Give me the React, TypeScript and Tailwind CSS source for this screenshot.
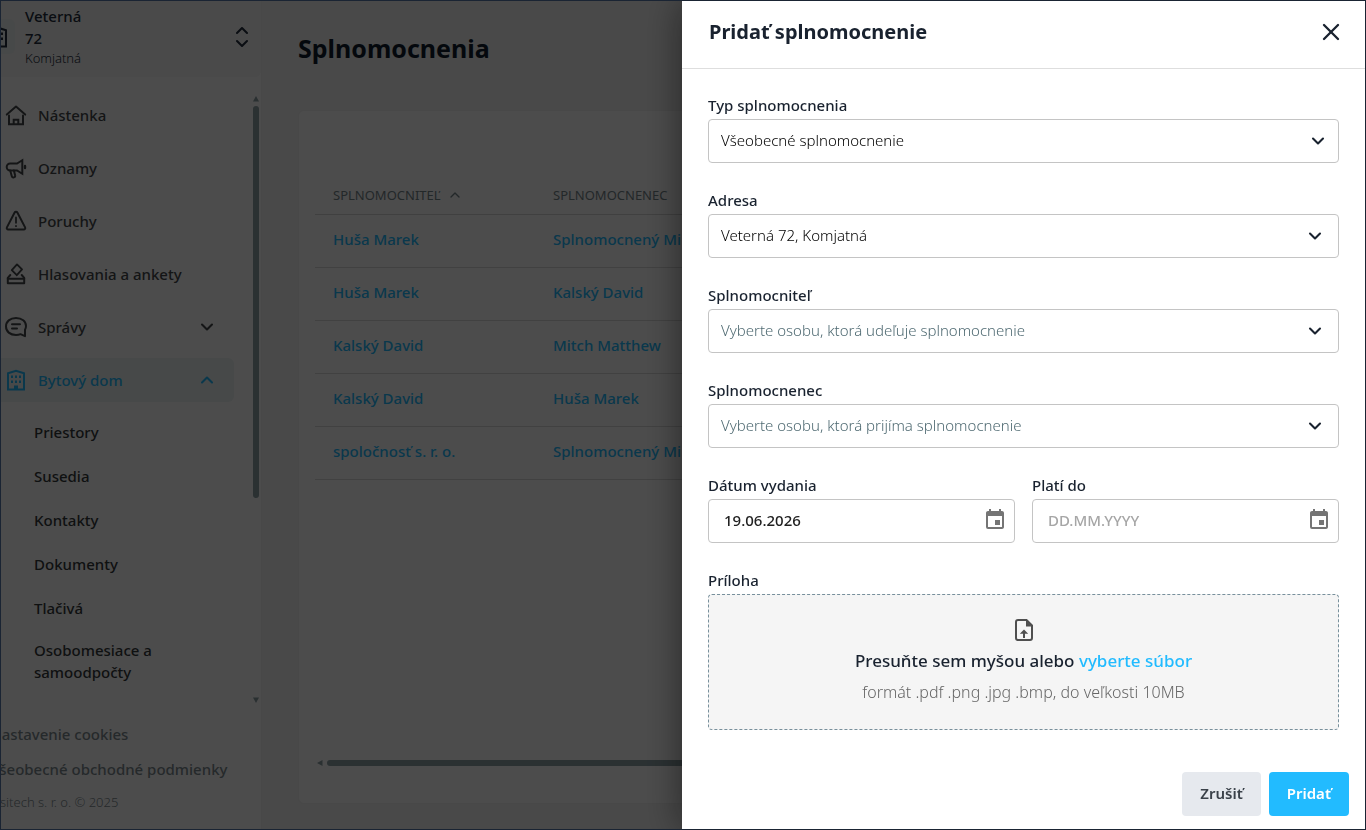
import { useState, type ReactNode } from 'react'
import { ChevronDown, ChevronUp, X } from 'lucide-react'
import { MdEvent } from 'react-icons/md'

const subItems = ['Priestory', 'Susedia', 'Kontakty', 'Dokumenty', 'Tlačivá', 'Osobomesiace a samoodpočty']

const rows = [
  { giver: 'Huša Marek', receiver: 'Splnomocnený Miro' },
  { giver: 'Huša Marek', receiver: 'Kalský David' },
  { giver: 'Kalský David', receiver: 'Mitch Matthew' },
  { giver: 'Kalský David', receiver: 'Huša Marek' },
  { giver: 'spoločnosť s. r. o.', receiver: 'Splnomocnený Miro' },
]

function NavIcon({ children }: { children: ReactNode }) {
  return (
    <svg
      viewBox="0 0 22 22"
      className="w-[22px] h-[22px] shrink-0"
      fill="none"
      stroke="currentColor"
      strokeWidth="2"
      strokeLinecap="round"
      strokeLinejoin="round"
      aria-hidden="true"
    >
      {children}
    </svg>
  )
}

const HomeIcon = () => (
  <NavIcon>
    <path d="M1.8 10.6 11 2.600l9.200 8" />
    <path d="M4 11.500V20.200h14v-8.700" strokeLinejoin="miter" />
    <path d="M8.700 20v-4.200h4.600V20" strokeLinejoin="miter" />
  </NavIcon>
)

const MegaphoneIcon = () => (
  <NavIcon>
    <path d="M17.300 3.200v13.600L12 13.500H5.200a3.300 3.300 0 0 1 0-7H12z" strokeLinejoin="miter" />
    <path d="M5.200 13.500l1.600 5.700a1.700 1.700 0 0 0 3.300-1L8.900 13.500" />
    <path d="M20 9v2" strokeWidth="2.400" />
  </NavIcon>
)

const WarningIcon = () => (
  <NavIcon>
    <path d="M9.500 2.700 1.900 17.400a1.500 1.500 0 0 0 1.300 2.200h15.600a1.500 1.500 0 0 0 1.300-2.200L12.500 2.700a1.700 1.700 0 0 0-3 0z" />
    <path d="M11 7.500v5.300M11 16v.2" strokeWidth="1.800" />
  </NavIcon>
)

const VoteIcon = () => (
  <NavIcon>
    <path d="m12 1.400 5 5-5.200 5.800-5-5z" strokeWidth="1.900" />
    <path d="M5.300 12 2.800 14.800v5.400h16.400v-5.400L16.700 12" />
    <path d="M2.800 15.800h16.400" />
  </NavIcon>
)

const ChatIcon = () => (
  <NavIcon>
    <path d="M20 20.200v-6.500c.7-1.200 1-2.400 1-3.700C21 5.500 17 2 11 2S1 5.500 1 10.500 5 19 11 19c1.700 0 3.200-.2 4.500-.8z" />
    <path d="M7 8.300h8M7 12.500h5" />
  </NavIcon>
)

const BuildingIcon = () => (
  <NavIcon>
    <path d="M3 20.500V4.300L11 1.700l8 2.600v16.200z" strokeLinejoin="miter" />
    <path d="M7 6.500v2.500M11 6.500v2.500M15 6.500v2.500M7 11.500v2.500M11 11.500v2.500M15 11.500v2.500" strokeLinecap="butt" />
    <path d="M11 20.500v-4" strokeWidth="4" strokeLinecap="butt" />
  </NavIcon>
)

const UploadIcon = () => (
  <svg viewBox="0 0 18 22" className="w-[18px] h-[22px]" fill="none" stroke="#4f4f4f" strokeWidth="2" aria-hidden="true">
    <path d="M11.500 1H3a2 2 0 0 0-2 2v16a2 2 0 0 0 2 2h12a2 2 0 0 0 2-2V6.500z" />
    <path d="M11 1v6.500h6z" fill="#4f4f4f" stroke="none" />
    <path d="M4.800 14.800 9 10.500l4.200 4.300H10V19H8v-4.200z" fill="#4f4f4f" stroke="none" />
  </svg>
)

function Sidebar() {
  const items = [
    { label: 'Nástenka', icon: <HomeIcon /> },
    { label: 'Oznamy', icon: <MegaphoneIcon /> },
    { label: 'Poruchy', icon: <WarningIcon /> },
    { label: 'Hlasovania a ankety', icon: <VoteIcon /> },
    { label: 'Správy', icon: <ChatIcon />, chevron: <ChevronDown className="w-5 h-5" strokeWidth={2.500} /> },
    {
      label: 'Bytový dom',
      icon: <BuildingIcon />,
      chevron: <ChevronUp className="w-5 h-5" strokeWidth={2.500} />,
      active: true,
    },
  ]

  return (
    <aside className="w-[282px] -ml-5 shrink-0 flex flex-col bg-white border-r border-[#f0f0f0] text-[15px] font-medium text-[#45494b]">
      <button className="h-[77px] pt-[5px] pr-2 flex items-start text-left bg-[#f7f7f7] rounded-b-md text-[#222e3c]">
        <span className="w-[35px] h-[35px] mt-3.5 flex items-center justify-center rounded-md bg-[#eef5f5]">
          <BuildingIcon />
        </span>
        <span className="ml-2.5 w-[72px]">
          <span className="block leading-[22px]">Veterná 72</span>
          <span className="block text-[13px] leading-[18px] font-light">Komjatná</span>
        </span>
        <svg
          viewBox="0 0 12 20"
          className="w-3 h-5 ml-auto mt-[22px] mr-[5px]"
          fill="none"
          stroke="currentColor"
          strokeWidth="2"
          strokeLinecap="round"
          strokeLinejoin="round"
          aria-hidden="true"
        >
          <path d="m1 6 5-5 5 5M1 14l5 5 5-5" />
        </svg>
      </button>

      <div className="flex-1 min-h-0 flex">
        <nav className="flex-1 min-h-0 overflow-hidden pt-4 pr-[19px]">
          <ul className="space-y-[9px]">
            {items.map((item) => (
              <li key={item.label}>
                <a
                  href="#"
                  className={`h-11 pl-[25px] pr-[17px] flex items-center gap-[11px] rounded-md ${
                    item.active ? 'bg-[#eef5f5] text-[#22bbff]' : ''
                  }`}
                >
                  {item.icon}
                  <span className="flex-1">{item.label}</span>
                  {item.chevron}
                </a>
              </li>
            ))}
          </ul>
          <ul className="pt-2">
            {subItems.map((item) => (
              <li key={item}>
                <a href="#" className="min-h-11 py-[9px] pl-[54px] pr-12 flex items-center leading-[22px] text-[#35393b]">
                  {item}
                </a>
              </li>
            ))}
          </ul>
        </nav>

        {/* Scrollbar */}
        <div className="w-1.5 mt-[19px] mb-1 mr-0.5 flex flex-col items-center gap-1">
          <svg viewBox="0 0 6 6" className="w-1.5 h-1.5" fill="#8ea0a5" aria-hidden="true">
            <path d="M3 0 6 5.500H0z" />
          </svg>
          <div className="w-full h-[392px] rounded-full bg-[#90a4a9]" />
          <svg viewBox="0 0 6 6" className="w-1.5 h-1.5 mt-auto" fill="#8ea0a5" aria-hidden="true">
            <path d="M0 .5h6L3 6z" />
          </svg>
        </div>
      </div>

      <footer className="pl-2.5 pt-2.5 pb-[13px] text-[#7e8b90] whitespace-nowrap">
        <a href="#" className="block leading-[35px] h-[35px]">Nastavenie cookies</a>
        <a href="#" className="block leading-[35px] h-[35px]">Všeobecné obchodné podmienky</a>
        <p className="text-[13px] leading-[30px] font-light">Ositech s. r. o. © 2025</p>
      </footer>
    </aside>
  )
}

function Content() {
  return (
    <main className="flex-1 min-w-0 flex flex-col bg-[#f4f4f4] px-9 pt-7 pb-[26px]">
      <h1 className="text-[25px] leading-10 font-bold text-[#101b2c]">Splnomocnenia</h1>
      <section className="mt-[42px] flex-1 flex flex-col bg-white rounded-md border border-[#f0f0f0] px-4 pt-16 pb-[37px] overflow-hidden">
        <table className="w-full table-fixed text-left text-[15px] font-medium">
          <thead>
            <tr className="h-[39px] border-b border-[#d5d5d5] text-[13px] text-[#75858b]">
              <th className="w-[220px] px-[18px] pt-0.5 font-normal">
                <span className="flex items-center gap-1.5">
                  SPLNOMOCNITEĽ
                  <ChevronUp className="w-4 h-4" />
                </span>
              </th>
              <th className="px-[18px] pt-0.5 font-normal">SPLNOMOCNENEC</th>
            </tr>
          </thead>
          <tbody>
            {rows.map((row, i) => (
              <tr key={i} className="h-[53px] border-b border-[#dadada] text-[#22bbff]">
                <td className="px-[18px] pb-0.5"><a href="#">{row.giver}</a></td>
                <td className="px-[18px] pb-0.5"><a href="#">{row.receiver}</a></td>
              </tr>
            ))}
          </tbody>
        </table>
        <div className="mt-auto pl-0.5 flex items-center gap-1">
          <svg viewBox="0 0 6 6" className="w-1.5 h-1.5" fill="#8ea0a5" aria-hidden="true">
            <path d="M0 3 5.500 0v6z" />
          </svg>
          <div className="flex-1 h-1.5 rounded-full bg-[#90a4a9]" />
        </div>
      </section>
    </main>
  )
}

type SelectFieldProps = {
  id: string
  label: string
  options: string[]
  placeholder?: string
  wide?: boolean
}

function SelectField({ id, label, options, placeholder, wide }: SelectFieldProps) {
  const [value, setValue] = useState(placeholder ? '' : options[0])

  return (
    <div>
      <label htmlFor={id} className="block mb-1 leading-5 font-medium">{label}</label>
      <div className="relative">
        <select
          id={id}
          value={value}
          onChange={(e) => setValue(e.target.value)}
          className={`block w-full h-11 pl-3 pr-12 pb-0.5 appearance-none bg-white border border-[#c4c4c4] rounded font-light outline-none focus:border-[#22bbff] ${
            value ? 'text-black' : 'text-[#4f6a72]'
          }`}
        >
          {placeholder && <option value="">{placeholder}</option>}
          {options.map((option) => (
            <option key={option} value={option}>{option}</option>
          ))}
        </select>
        <ChevronDown
          className={`absolute top-3 w-5 h-5 pointer-events-none text-[#19222f] ${wide ? 'right-[11px]' : 'right-3.5'}`}
          strokeWidth={2.500}
        />
      </div>
    </div>
  )
}

function DateField({ id, label, initial = '' }: { id: string; label: string; initial?: string }) {
  const [value, setValue] = useState(initial)

  return (
    <div>
      <label htmlFor={id} className="block mb-1 leading-5 font-medium">{label}</label>
      <div className="h-11 flex items-center pl-[15px] pr-[7px] pb-0.5 border border-[#c4c4c4] rounded focus-within:border-[#22bbff]">
        <input
          id={id}
          type="text"
          value={value}
          placeholder="DD.MM.YYYY"
          onChange={(e) => setValue(e.target.value)}
          className="flex-1 min-w-0 font-medium text-[#212121] placeholder:text-[#a6a6a6] outline-none"
        />
        <button type="button" aria-label="Vybrať dátum" className="text-[#757575]">
          <MdEvent className="w-6 h-6" />
        </button>
      </div>
    </div>
  )
}

function Drawer() {
  return (
    <div
      role="dialog"
      aria-labelledby="drawer-title"
      className="fixed inset-y-px right-px w-1/2 flex flex-col bg-white text-[15px] text-[#19222f] shadow-[0_0_36px_rgba(0,0,0,0.5)] overflow-y-auto"
    >
      <header className="pl-[27px] pr-5 pt-[17px] pb-[22px] flex items-center justify-between border-b border-[#dedede]">
        <h2 id="drawer-title" className="text-[20px] leading-7 font-bold">Pridať splnomocnenie</h2>
        <button aria-label="Zavrieť">
          <X className="w-7 h-7" />
        </button>
      </header>

      <form className="flex-1 flex flex-col" onSubmit={(e) => e.preventDefault()}>
        <div className="px-[26px] pt-[26px] space-y-[27px]">
          <SelectField id="type" label="Typ splnomocnenia" options={['Všeobecné splnomocnenie']} wide />
          <SelectField id="address" label="Adresa" options={['Veterná 72, Komjatná']} />
          <SelectField
            id="giver"
            label="Splnomocniteľ"
            placeholder="Vyberte osobu, ktorá udeľuje splnomocnenie"
            options={['Huša Marek', 'Kalský David']}
          />
          <SelectField
            id="receiver"
            label="Splnomocnenec"
            placeholder="Vyberte osobu, ktorá prijíma splnomocnenie"
            options={['Mitch Matthew', 'Huša Marek']}
          />
          <div className="grid grid-cols-2 gap-[17px]">
            <DateField id="issued" label="Dátum vydania" initial="19.06.2026" />
            <DateField id="valid-to" label="Platí do" />
          </div>
          <div>
            <label htmlFor="attachment" className="block mb-1 leading-5 font-medium">Príloha</label>
            <label
              htmlFor="attachment"
              className="h-[136px] pt-2.5 pb-3 flex flex-col items-center justify-center bg-[#f5f5f5] border border-dashed border-[#78909c] rounded cursor-pointer"
            >
              <UploadIcon />
              <span className="mt-2 text-[17px] leading-6 font-medium">
                Presuňte sem myšou alebo <span className="text-[#22bbff]">vyberte súbor</span>
              </span>
              <span className="mt-[7px] text-[16px] leading-6 font-light text-[#666666]">
                formát .pdf .png .jpg .bmp, do veľkosti 10MB
              </span>
            </label>
            <input id="attachment" type="file" className="sr-only" />
          </div>
        </div>

        <div className="mt-auto pr-4 pb-[13px] flex justify-end gap-2 font-semibold">
          <button type="button" className="h-11 px-[18px] pb-0.5 rounded bg-[#e6e9ee] text-[#3a4149]">Zrušiť</button>
          <button type="submit" className="h-11 px-[18px] pb-0.5 rounded bg-[#22bbff] text-white">Pridať</button>
        </div>
      </form>
    </div>
  )
}

export default function App() {
  return (
    <div className="h-screen font-['Noto_Sans','Open_Sans',sans-serif] overflow-hidden">
      <div className="flex h-full overflow-hidden">
        <Sidebar />
        <Content />
      </div>
      <div className="fixed inset-0 bg-black/70" />
      <Drawer />
      <div className="fixed inset-0 border border-[#1a2433] pointer-events-none" />
    </div>
  )
}
